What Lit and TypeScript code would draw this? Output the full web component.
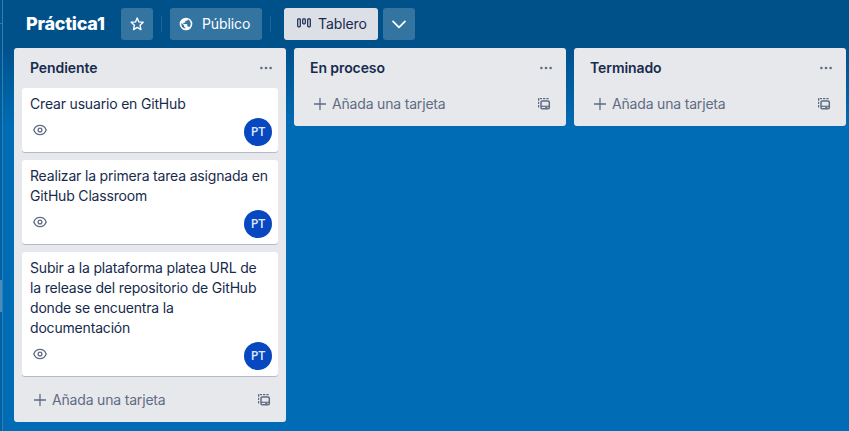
import { LitElement, html, css, nothing } from "lit";
import { customElement, property } from "lit/decorators.js";

const star = html`<svg width="16" height="16" viewBox="0 0 16 16" fill="none" stroke="currentColor" stroke-width="1.4" stroke-linejoin="round"><path d="M8.200 1.900l1.700 4 4.300.4-3.200 2.900.9 4.400-3.700-2.200-3.700 2.200.9-4.400L2.200 6.300l4.300-.4z"/></svg>`;
const globe = html`<svg width="16" height="16" viewBox="0 0 24 24" fill="currentColor"><path fill-rule="evenodd" d="M12 2.500a9.500 9.500 0 1 0 0 19 9.500 9.500 0 0 0 0-19zM5 12c0-.5.1-1.100.2-1.600L9 14v1c0 1.100.9 2 2 2v1.900A7 7 0 0 1 5 12zm11.900 5c-.3-.8-1-1.400-1.900-1.400h-1v-2.600c0-.5-.4-1-1-1H8v-2h2c.5 0 1-.4 1-1V7h2c1.100 0 2-.9 2-2v-.3a7.800 7.800 0 0 1 1.900 12.300z"/></svg>`;
const board = html`<svg width="16" height="16" viewBox="0 0 16 16" fill="none" stroke="currentColor" stroke-width="1.200"><rect x="1.700" y="2.900" width="2.600" height="7.900" rx=".8"/><rect x="6.700" y="2.900" width="2.600" height="4.900" rx=".8"/><rect x="11.700" y="2.900" width="2.600" height="7.900" rx=".8"/></svg>`;
const chevron = html`<svg width="16" height="16" viewBox="0 0 16 16" fill="none" stroke="currentColor" stroke-width="1.700" stroke-linecap="round" stroke-linejoin="round"><path d="M2 5.300l6 6 6-6"/></svg>`;
const dots = html`<svg width="16" height="16" viewBox="0 0 16 16" fill="currentColor"><circle cx="3.400" cy="8" r="1.300"/><circle cx="8" cy="8" r="1.300"/><circle cx="12.600" cy="8" r="1.300"/></svg>`;
const plus = html`<svg width="16" height="16" viewBox="0 0 16 16" fill="none" stroke="currentColor" stroke-width="1.300" stroke-linecap="round"><path d="M8 2.500v11M2.500 8h11"/></svg>`;
const eye = html`<svg width="16" height="16" viewBox="0 0 16 16" fill="none" stroke="currentColor" stroke-width="1.300"><path d="M1.800 8C3 4.800 5.200 3.400 8 3.400S13 4.800 14.200 8C13 11.200 10.800 12.600 8 12.600S3 11.200 1.800 8z"/><circle cx="8" cy="8" r="1.900"/></svg>`;
const template = html`<svg width="16" height="16" viewBox="0 0 16 16" fill="none" stroke="currentColor"><path stroke-width="1.200" stroke-dasharray="2.300 1" d="M12.600 2.600H2.600V12"/><rect x="5" y="4.900" width="8.300" height="7.900" rx="1.300" stroke-width="1.500"/><path stroke-width="1.200" d="M5 10.300h8.300"/><path stroke-width="1.400" d="M9.300 11.600h2"/></svg>`;

@customElement("board-card")
class BoardCard extends LitElement {
  @property() text = "";
  static styles = css`
    :host { display: block; background: #fff; border-radius: 3px; box-shadow: 0 1px 0 #b4bac6; padding: 6px 6px 6px 8px; }
    .text { color: #172b4d; font-size: 14px; line-height: 20px; letter-spacing: -0.18px; white-space: pre; }
    .foot { display: flex; justify-content: space-between; height: 30px; margin-top: 2px; }
    .eye { color: #5e6c84; padding: 6px 0 0 2px; line-height: 0; height: 16px; }
    .avatar { width: 28px; height: 28px; margin-top: 2px; border-radius: 50%; background: #0747bf; color: #dfe8fb; display: grid; place-items: center; font: 600 12.5px/28px "Open Sans", sans-serif; }
  `;
  render() {
    return html`<div class="text">${this.text}</div>
      <div class="foot"><span class="eye">${eye}</span><span class="avatar">PT</span></div>`;
  }
}

@customElement("board-list")
class BoardList extends LitElement {
  @property() name = "";
  @property({ attribute: false }) cards: string[] = [];
  static styles = css`
    :host { display: block; box-sizing: border-box; width: 272px; flex: none; background: #e7e8ec; border-radius: 3px; padding: 0 8px 6px; }
    svg { display: block; }
    header { display: flex; height: 40px; align-items: center; justify-content: space-between; padding: 0 4px 0 8px; color: #172b4d; }
    h2 { margin: 0; font-size: 14px; line-height: 20px; font-weight: 600; letter-spacing: -0.08px; }
    .dots, .template, .add { color: #5e6c84; }
    .cards { display: flex; flex-direction: column; gap: 8px; }
    .add { display: flex; height: 32px; align-items: center; font-size: 14px; line-height: 20px; letter-spacing: -0.18px; padding: 0 6px 0 10px; }
    .cards + .add { margin-top: 8px; }
    .label { margin-left: 4px; flex: 1; }
  `;
  render() {
    return html`<header><h2>${this.name}</h2><span class="dots">${dots}</span></header>
      ${this.cards.length
        ? html`<div class="cards">${this.cards.map((c) => html`<board-card .text=${c}></board-card>`)}</div>`
        : nothing}
      <div class="add">${plus}<span class="label">Añada una tarjeta</span><span class="template">${template}</span></div>`;
  }
}

@customElement("app-root")
class AppRoot extends LitElement {
  static styles = css`
    :host { display: flex; width: 849px; height: 431px; overflow: hidden; font-family: Inter, "Liberation Sans", sans-serif; background: linear-gradient(#00508a 0, #00508a 44px, #006cb5 128px); }
    svg { display: block; }
    .rail { width: 2px; flex: none; border-right: 1px solid #2f7fb7; background: #00579180; }
    .rule { height: 1px; margin-top: 23px; background: #3374a1; }
    .thumb { height: 32px; margin-top: 256px; background: #4c8cbb; }
    .main { flex: none; padding-left: 11px; }
    .bar { display: flex; align-items: center; height: 48px; padding-left: 12px; color: #fff; }
    h1 { margin: 0; width: 95px; font-size: 18px; line-height: 24px; font-weight: 800; letter-spacing: -0.25px; }
    .btn { display: flex; align-items: center; box-sizing: border-box; height: 32px; border-radius: 3px; background: #3374a1; font-size: 14px; line-height: 20px; letter-spacing: -0.1px; }
    .square { width: 32px; justify-content: center; }
    .sep { width: 1px; height: 16px; background: #1f6595; margin: 0 8px; }
    .public { width: 92px; gap: 8px; padding-left: 8px; }
    .view { width: 94px; gap: 6px; padding-left: 12px; background: #dcdfe5; color: #172b4d; margin: 0 5px; }
    .lists { display: flex; align-items: flex-start; gap: 8px; }
  `;
  render() {
    return html`
      <div class="rail"><div class="rule"></div><div class="thumb"></div></div>
      <div class="main">
        <div class="bar">
          <h1>Práctica1</h1>
          <span class="btn square">${star}</span><span class="sep"></span>
          <span class="btn public">${globe}<span>Público</span></span><span class="sep"></span>
          <span class="btn view">${board}<span>Tablero</span></span>
          <span class="btn square">${chevron}</span>
        </div>
        <div class="lists">
          <board-list name="Pendiente" .cards=${[
            "Crear usuario en GitHub",
            "Realizar la primera tarea asignada en\nGitHub Classroom",
            "Subir a la plataforma platea URL de\nla release del repositorio de GitHub\ndonde se encuentra la\ndocumentación",
          ]}></board-list>
          <board-list name="En proceso"></board-list>
          <board-list name="Terminado"></board-list>
        </div>
      </div>`;
  }
}
